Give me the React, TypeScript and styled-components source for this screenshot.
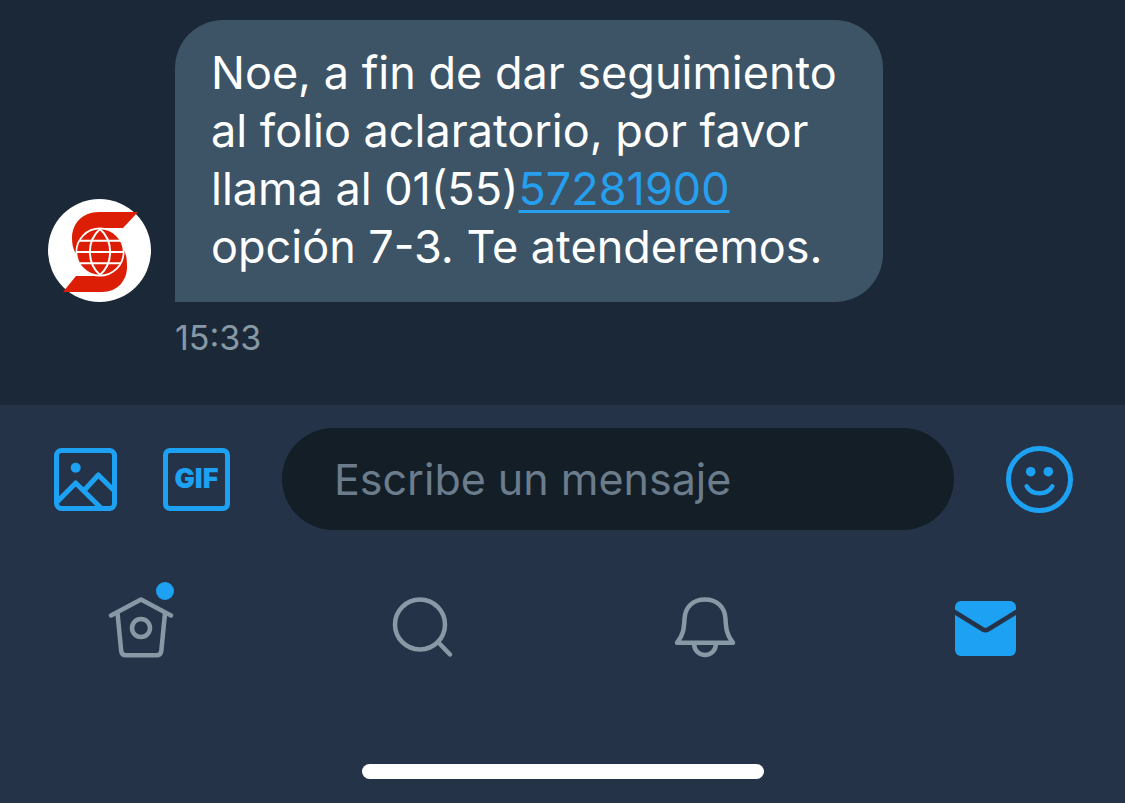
import React from "react";
import styled, { createGlobalStyle } from "styled-components";

const color = {
  thread: "#1b2837",
  panel: "#253348",
  bubble: "#3d5466",
  field: "#131e27",
  accent: "#1da1f2",
  link: "#259fee",
  muted: "#8899a6",
  placeholder: "#6b7c8c",
};

const GlobalStyle = createGlobalStyle`
  *, *::before, *::after { box-sizing: border-box; }
  body {
    margin: 0;
    background: ${color.panel};
    font-family: Inter, "Liberation Sans", sans-serif;
  }
`;

const Screen = styled.div`
  display: flex;
  flex-direction: column;
  min-height: 100vh;
`;

const Thread = styled.main`
  flex: 1;
  display: flex;
  flex-direction: column;
  justify-content: flex-end;
  padding: 20px 48px 47px;
  background: ${color.thread};
`;

const MessageRow = styled.article`
  display: grid;
  grid-template-columns: 103px minmax(0, 708px);
  column-gap: 24px;
  align-items: end;
`;

const Avatar = styled.svg`
  display: block;
  width: 103px;
  height: 103px;
`;

const Bubble = styled.p`
  margin: 0;
  padding: 24px 36px 26px;
  border-radius: 48px 48px 48px 0;
  background: ${color.bubble};
  color: #fff;
  font-size: 45px;
  line-height: 58px;
`;

const PhoneLink = styled.a`
  display: inline-block;
  color: ${color.link};
  text-decoration: underline;
  text-decoration-thickness: 3px;
  text-underline-offset: 5px;
  text-decoration-skip-ink: none;
`;

const Time = styled.time`
  grid-column: 2;
  margin-top: 16px;
  color: ${color.muted};
  font-size: 34px;
  line-height: 40px;
`;

const Footer = styled.footer`
  background: ${color.panel};
`;

const Composer = styled.form`
  display: flex;
  align-items: center;
  padding: 23px 52px 0 54px;
`;

const ToolButton = styled.button<{ $gap?: number }>`
  flex: none;
  margin: 0 ${(p) => p.$gap ?? 0}px 0 0;
  padding: 0;
  border: 0;
  background: none;
  color: ${color.accent};
  cursor: pointer;

  svg { display: block; }
`;

const GifButton = styled(ToolButton)`
  width: 67px;
  height: 63px;
  border: 5px solid ${color.accent};
  border-radius: 7px;
  font-family: inherit;
  font-size: 27px;
  font-weight: 900;
  line-height: 52px;
  text-align: center;
`;

const MessageField = styled.input`
  flex: 1;
  min-width: 0;
  height: 102px;
  margin-right: 52px;
  padding: 0 52px;
  border: 0;
  border-radius: 51px;
  outline: none;
  background: ${color.field};
  color: #fff;
  font-family: inherit;
  font-size: 43px;

  &::placeholder { color: ${color.placeholder}; opacity: 1; }
`;

const TabBar = styled.nav`
  display: grid;
  grid-template-columns: repeat(4, 1fr);
  padding: 65px 0 105px;
`;

const Tab = styled.a<{ $active?: boolean }>`
  position: relative;
  justify-self: center;
  color: ${(p) => (p.$active ? color.accent : color.muted)};

  svg { display: block; }
`;

const UnreadDot = styled.span`
  position: absolute;
  top: -13px;
  right: 1px;
  width: 18px;
  height: 18px;
  border-radius: 50%;
  background: ${color.accent};
`;

const HomeIndicator = styled.div`
  width: 402px;
  max-width: 60%;
  height: 15px;
  margin: 0 auto 24px;
  border-radius: 8px;
  background: #fff;
`;

const BankLogo = () => (
  <Avatar viewBox="0 0 103 103" role="img" aria-label="Scotiabank">
    <circle cx="51.5" cy="51.5" r="51.5" fill="#fff" />
    <path
      d="M90 13H51C34 13 24 25 24 39C24 45 25 50 27.5 54L52 29H75Z"
      fill="#db1e05"
    />
    <path
      d="M15 93H54C70 93 79 81 79 68C79 61 78.500 57 76.500 52L52 77H28Z"
      fill="#db1e05"
    />
    <circle cx="52" cy="53" r="24.500" fill="#fff" />
    <circle cx="52" cy="53" r="22.800" fill="#db1e05" />
    <g fill="none" stroke="#fff" strokeWidth="2">
      <path d="M32 41.700H72M29 53H75M32 64.300H72" />
      <path d="M52 30C38.500 42 38.500 64 52 76M52 30C65.500 42 65.500 64 52 76" />
    </g>
  </Avatar>
);

const PhotoIcon = () => (
  <svg width="63" height="63" viewBox="0 0 63 63" fill="none" stroke="currentColor" strokeWidth="5" strokeLinejoin="round" aria-hidden="true">
    <rect x="2.500" y="2.500" width="58" height="58" rx="5" />
    <path d="M3 54L21.700 35L47 60M31 41.500L44.300 27L60 42.500" />
    <circle cx="21.700" cy="19.700" r="5" fill="currentColor" stroke="none" />
  </svg>
);

const SmileIcon = () => (
  <svg width="67" height="67" viewBox="0 0 67 67" fill="none" stroke="currentColor" strokeWidth="5" strokeLinecap="round" aria-hidden="true">
    <circle cx="33.500" cy="33.500" r="31" />
    <path d="M20.700 40.300C26 49.500 41 49.500 46.300 40.300" strokeWidth="4.500" />
    <circle cx="24.700" cy="25.700" r="4.800" fill="currentColor" stroke="none" />
    <circle cx="42.300" cy="25.700" r="4.800" fill="currentColor" stroke="none" />
  </svg>
);

const TabIcon = ({ children }: { children: React.ReactNode }) => (
  <svg width="68" height="64" viewBox="0 0 68 64" fill="none" stroke="currentColor" strokeWidth="4.500" strokeLinecap="round" strokeLinejoin="round" aria-hidden="true">
    {children}
  </svg>
);

export default function App() {
  return (
    <Screen>
      <GlobalStyle />
      <Thread>
        <MessageRow>
          <BankLogo />
          <Bubble>
            Noe, a fin de dar seguimiento al folio aclaratorio, por favor llama al 01(55)
            <PhoneLink href="tel:57281900">57281900</PhoneLink> opción 7-3. Te atenderemos.
          </Bubble>
          <Time dateTime="15:33">15:33</Time>
        </MessageRow>
      </Thread>
      <Footer>
        <Composer onSubmit={(e) => e.preventDefault()}>
          <ToolButton type="button" aria-label="Foto" $gap={46}>
            <PhotoIcon />
          </ToolButton>
          <GifButton type="button" $gap={52}>GIF</GifButton>
          <MessageField type="text" aria-label="Escribe un mensaje" placeholder="Escribe un mensaje" />
          <ToolButton type="button" aria-label="Emoji">
            <SmileIcon />
          </ToolButton>
        </Composer>
        <TabBar>
          <Tab href="#inicio" aria-label="Inicio">
            <TabIcon>
              <path d="M4 20.500L34 4.500L64 20.500" />
              <path d="M10.500 18L14.200 56Q14.700 60.300 19 60.300H49.500Q53.800 60.300 54.300 56L58 18" />
              <circle cx="34" cy="33" r="9" />
            </TabIcon>
            <UnreadDot />
          </Tab>
          <Tab href="#buscar" aria-label="Buscar">
            <TabIcon>
              <circle cx="32" cy="29.500" r="25" />
              <path d="M50.500 47.500L62 59.500" />
            </TabIcon>
          </Tab>
          <Tab href="#notificaciones" aria-label="Notificaciones">
            <TabIcon>
              <path d="M8 47.700C14.500 40 15 33 15.500 24C16 11.500 24.500 4.500 36 4.500C47.500 4.500 56 11.500 56.500 24C57 33 57.500 40 64 47.700Z" />
              <path d="M25 49C25.500 56 30.500 60 36 60S46.500 56 47 49" />
            </TabIcon>
          </Tab>
          <Tab href="#mensajes" aria-label="Mensajes" $active>
            <TabIcon>
              <rect x="5" y="6" width="61" height="55" rx="6" fill="currentColor" stroke="none" />
              <path d="M3 16L33 34.500Q35.500 36 38 34.500L68 16" stroke={color.panel} />
            </TabIcon>
          </Tab>
        </TabBar>
        <HomeIndicator />
      </Footer>
    </Screen>
  );
}
